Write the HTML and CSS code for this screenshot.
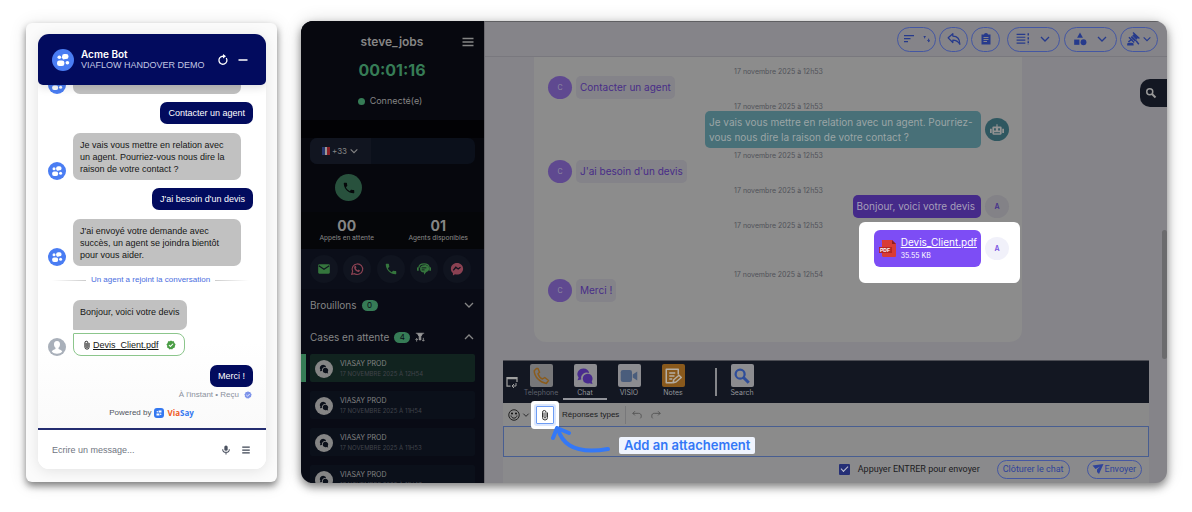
FILE: index.html
```html
<!DOCTYPE html>
<html lang="fr">
<head>
<meta charset="utf-8">
<title>Viaflow handover demo</title>
<link rel="stylesheet" href="styles.css">
</head>
<body>
<svg class="defs" aria-hidden="true">
  <symbol id="people" viewBox="0 0 24 24"><circle cx="12" cy="12" r="12" fill="#4a7df3"/><g fill="#fff"><circle cx="8" cy="9" r="2"/><rect x="11" y="5.500" width="7" height="5.500" rx="2.500"/><rect x="5.500" y="12.500" width="8" height="6" rx="2.500"/><circle cx="16.800" cy="15" r="2"/><path d="M11 9l1-2 3 4-3 .5z"/></g></symbol>
  <symbol id="phone" viewBox="0 0 24 24"><path fill="currentColor" d="M6.600 10.800c1.400 2.800 3.800 5.100 6.600 6.600l2.200-2.200c.3-.3.700-.4 1-.2 1.100.4 2.300.6 3.600.6.600 0 1 .4 1 1V20c0 .6-.4 1-1 1C10.600 21 3 13.400 3 4c0-.6.400-1 1-1h3.500c.6 0 1 .4 1 1 0 1.300.2 2.500.6 3.600.1.300 0 .7-.2 1z"/></symbol>
  <symbol id="down" viewBox="0 0 12 12"><path d="M2 4l4 4 4-4" fill="none" stroke="currentColor" stroke-width="1.300"/></symbol>
  <symbol id="clip" viewBox="0 0 24 24"><path d="M17 7v10a5 5 0 0 1-10 0V6.500a3.500 3.500 0 0 1 7 0V16a2 2 0 0 1-4 0V7" fill="none" stroke="currentColor" stroke-width="2"/></symbol>
  <symbol id="chats" viewBox="0 0 24 24"><path fill="currentColor" d="M10 2a8 7.500 0 0 0-6.500 12L2 17.500l5-1A7.500 7.500 0 0 1 17.500 8 8 7.500 0 0 0 10 2z"/><path fill="currentColor" d="M16 9a6.500 6.500 0 1 0 2 12.500l4 1-1-3.500A6.500 6.500 0 0 0 16 9z"/></symbol>
  <symbol id="seal" viewBox="0 0 24 24"><path fill="currentColor" d="M12 1l3 2 4 0 1 4 3 3-1.500 4L21 18l-4 1.500-2.500 3L12 21.500 8.500 22.500 6 19.500 2.500 18 3 14 1 10.500 4 7l1-4 4 0z"/><path d="M7 12l3.500 3.500L17 9" fill="none" stroke="#fff" stroke-width="2.500"/></symbol>
  <symbol id="search" viewBox="0 0 24 24"><circle cx="9.500" cy="9.500" r="6" fill="none" stroke="currentColor" stroke-width="3"/><path d="M14 14l7 7" stroke="currentColor" stroke-width="4"/></symbol>
</svg>

<section class="frame">
  <div class="widget">
    <header class="w-head">
      <svg class="i22"><use href="#people"/></svg>
      <div class="w-title"><strong>Acme Bot</strong><span>VIAFLOW HANDOVER DEMO</span></div>
      <button class="plain" aria-label="Recharger"><svg class="i12" viewBox="0 0 24 24"><path d="M18.500 8a8 8 0 1 1-6.500-3.500h3" fill="none" stroke="#fff" stroke-width="2.600"/><path d="M12 0l6 4.500-6 4.500z" fill="#fff"/></svg></button>
      <button class="plain" aria-label="Réduire"><svg class="i12" viewBox="0 0 24 24"><path d="M3 12h18" stroke="#fff" stroke-width="3"/></svg></button>
    </header>
    <div class="w-log">
      <div class="w-row"><svg class="i18"><use href="#people"/></svg><div class="bot"><span class="emoji"></span></div></div>
      <div class="me">Contacter un agent</div>
      <div class="w-row"><svg class="i18"><use href="#people"/></svg><div class="bot wide">Je vais vous mettre en relation avec un agent. Pourriez-vous nous dire la raison de votre contact ?</div></div>
      <div class="me">J'ai besoin d'un devis</div>
      <div class="w-row"><svg class="i18"><use href="#people"/></svg><div class="bot wide">J'ai envoyé votre demande avec succès, un agent se joindra bientôt pour vous aider.</div></div>
      <div class="joined">Un agent a rejoint la conversation</div>
      <div class="w-row">
        <svg class="i18" viewBox="0 0 24 24"><circle cx="12" cy="12" r="12" fill="#a9b0ba"/><path d="M12 4c-3 0-4 2-4 4.500 0 2 1 3.500 2 4.500v1.500c-2 1-4.500 1.500-5 3.500 3 4 11 4 14 0-.5-2-3-2.500-5-3.500V13c1-1 2-2.500 2-4.500C16 6 15 4 12 4z" fill="#fff"/></svg>
        <div class="stack">
          <div class="bot last">Bonjour, voici votre devis</div>
          <div class="file"><svg class="i10"><use href="#clip"/></svg><a href="#devis">Devis_Client.pdf</a><svg class="i10 ok"><use href="#seal"/></svg></div>
        </div>
      </div>
      <div class="me merci">Merci !</div>
      <div class="status">À l'instant • Reçu <svg class="i8"><use href="#seal"/></svg></div>
      <div class="powered">Powered by <svg class="i10" viewBox="0 0 24 24"><rect width="24" height="24" rx="7" fill="#3478f0"/><path d="M11 6h7v5h-7zM6 13h7v5H6z" fill="#fff"/><circle cx="8" cy="9" r="1.800" fill="#fff"/><circle cx="16" cy="15" r="1.800" fill="#fff"/></svg><b><i>Via</i>Say</b></div>
    </div>
    <div class="w-input">
      <input type="text" aria-label="Message" placeholder="Ecrire un message...">
      <button class="plain" aria-label="Micro"><svg class="i10" viewBox="0 0 24 24"><rect x="8" y="1" width="8" height="13" rx="4" fill="#4b5260"/><path d="M4 10c0 10 16 10 16 0M12 17v6" fill="none" stroke="#4b5260" stroke-width="2.500"/></svg></button>
      <button class="plain" aria-label="Menu"><svg class="i10" viewBox="0 0 24 24"><path d="M3 5h18M3 12h18M3 19h18" stroke="#3d4453" stroke-width="3"/></svg></button>
    </div>
  </div>
</section>

<section class="app">
  <aside class="side">
    <div class="agent">
      <div class="who"><strong>steve_jobs</strong><button class="plain" aria-label="Menu"><svg class="i12" viewBox="0 0 24 24"><path d="M1 5h22M1 12h22M1 19h22" stroke="#858585" stroke-width="2.600"/></svg></button></div>
      <div class="timer">00:01:16</div>
      <div class="online"><span class="dot"></span>Connecté(e)</div>
    </div>
    <div class="dial">
      <div class="number"><button class="prefix"><span class="flag"></span>+33<svg class="i10"><use href="#down"/></svg></button><input type="tel" aria-label="Numéro"></div>
      <button class="call" aria-label="Appeler"><svg class="i14"><use href="#phone"/></svg></button>
    </div>
    <div class="counts">
      <div><strong>00</strong><span>Appels en attente</span></div>
      <div><strong>01</strong><span>Agents disponibles</span></div>
    </div>
    <div class="channels">
      <button class="green" aria-label="Email"><svg class="i14" viewBox="0 0 24 24"><path d="M4 4h16a2 2 0 0 1 2 2v12a2 2 0 0 1-2 2H4a2 2 0 0 1-2-2V6a2 2 0 0 1 2-2z" fill="currentColor"/><path d="M3 6.500l9 6 9-6" fill="none" stroke="#10141f" stroke-width="2"/></svg></button>
      <button class="red" aria-label="WhatsApp"><svg class="i14" viewBox="0 0 24 24"><path d="M3 21l1.500-5A9 9 0 1 1 8 20z" fill="none" stroke="currentColor" stroke-width="2"/><path d="M8 7l2-.5 1 3-1 1c.5 1.500 2 3 3.500 3.500l1-1 2.500 1c0 2-1.500 3-3 3-4-1-7-4-7-8z" fill="currentColor"/></svg></button>
      <button class="green" aria-label="Téléphone"><svg class="i14"><use href="#phone"/></svg></button>
      <button class="green" aria-label="Chatbot"><svg class="i14" viewBox="0 0 24 24"><path d="M3 10C4 1 20 1 21 10" fill="none" stroke="currentColor" stroke-width="2"/><rect y="9" width="3" height="6" rx="1" fill="currentColor"/><rect x="21" y="9" width="3" height="6" rx="1" fill="currentColor"/><path d="M12 5.500a6.500 6 0 1 0 0 12.500v4l4-5A6.500 6 0 0 0 12 5.500z" fill="currentColor"/><path d="M8 10h8M8 13.500h5" stroke="#10141f" stroke-width="1.500"/></svg></button>
      <button class="red" aria-label="Messenger"><svg class="i14" viewBox="0 0 24 24"><path d="M12 1.500c-6 0-10.500 4.400-10.500 10 0 3 1.300 5.600 3.500 7.400V23l3.500-2c7 2 14-2.500 14-9.500 0-5.600-4.500-10-10.500-10z" fill="currentColor"/><path d="M5.500 14.500L10 9l4 3 4-3" fill="none" stroke="#10141f" stroke-width="2.200"/></svg></button>
    </div>
    <div class="lists">
      <button class="group">Brouillons <span class="badge">0</span><svg class="i12 end"><use href="#down"/></svg></button>
      <button class="group">Cases en attente <span class="badge">4</span><svg class="i10" viewBox="0 0 24 24"><path d="M2 3h20M6 4h12l-4 7v8h-4v-8z" fill="#999" stroke="#999" stroke-width="2"/><path d="M4 15v8M1 19l3-3 3 3M20 14v8M17 19l3 3 3-3" fill="none" stroke="#999" stroke-width="2"/></svg><svg class="i12 end up"><use href="#down"/></svg></button>
      <div class="cases">
        <div class="case active"><span class="round"><svg class="i10"><use href="#chats"/></svg></span><div><b>VIASAY PROD</b><small>17 NOVEMBRE 2025 À 12H54</small></div></div>
        <div class="case"><span class="round"><svg class="i10"><use href="#chats"/></svg></span><div><b>VIASAY PROD</b><small>17 NOVEMBRE 2025 À 11H54</small></div></div>
        <div class="case"><span class="round"><svg class="i10"><use href="#chats"/></svg></span><div><b>VIASAY PROD</b><small>17 NOVEMBRE 2025 À 11H53</small></div></div>
        <div class="case"><span class="round"><svg class="i10"><use href="#chats"/></svg></span><div><b>VIASAY PROD</b><small>17 NOVEMBRE 2025 À 11H47</small></div></div>
      </div>
    </div>
  </aside>

  <main class="main">
    <div class="tools">
      <button class="pill mid" aria-label="Trier"><svg class="i12" viewBox="0 0 24 24"><path d="M2 5h20M2 11h13M2 17h8" stroke="currentColor" stroke-width="2.500"/></svg><svg class="i8" viewBox="0 0 24 24"><path d="M5 3v7M2 6l3-3 3 3M17 11v9M13 16l4 4 4-4" fill="none" stroke="currentColor" stroke-width="3"/></svg></button>
      <button class="pill" aria-label="Répondre"><svg class="i14" viewBox="0 0 24 24"><path d="M2 10l8-7v4c8 0 12 5 12 14-3-5-6-7-12-7v4z" fill="none" stroke="currentColor" stroke-width="2.200" stroke-linejoin="round"/></svg></button>
      <button class="pill" aria-label="Notes"><svg class="i12" viewBox="0 0 24 24"><path d="M3 3h5a4 3 0 0 1 8 0h5v20H3z" fill="currentColor"/><path d="M7 9h10M7 13h10M7 17h7" stroke="#858489" stroke-width="2"/></svg></button>
      <button class="pill big" aria-label="Liste"><svg class="i14" viewBox="0 0 24 24"><path d="M1 4h15M1 9h15M1 14h15M1 19h15" stroke="currentColor" stroke-width="2"/><path d="M21 2v5M21 9v5M21 16v5" stroke="currentColor" stroke-width="2.500" stroke-dasharray="3 1"/></svg><svg class="i12"><use href="#down"/></svg></button>
      <button class="pill big gap" aria-label="Catégories"><svg class="i14" viewBox="0 0 24 24"><path d="M12 1l5 9H7z" fill="currentColor"/><rect x="2" y="13" width="9" height="9" fill="currentColor"/><circle cx="18" cy="17.500" r="5" fill="currentColor"/></svg><svg class="i12"><use href="#down"/></svg></button>
      <button class="pill mid last-pill" aria-label="Modérer"><svg class="i14" viewBox="0 0 24 24"><path d="M8 9l6-6 7 7-6 6zM2 23v-3c0-2 11-2 11 0v3z" fill="currentColor"/><path d="M12 1l11 10M5 9l9 9M15 12l7 9M11 12l-7 5" stroke="currentColor" stroke-width="2.400"/><path d="M9 5l10 10" stroke="#858489"/></svg><svg class="i10"><use href="#down"/></svg></button>
    </div>

    <div class="chat">
      <div class="panel">
        <time>17 novembre 2025 à 12h53</time>
        <div class="line"><span class="ava c">C</span><p class="in">Contacter un agent</p></div>
        <time>17 novembre 2025 à 12h53</time>
        <div class="line out"><p class="auto">Je vais vous mettre en relation avec un agent. Pourriez-vous nous dire la raison de votre contact ?</p><span class="ava robot"><svg class="i14" viewBox="0 0 24 24"><path d="M11 2h2v4h5a2 2 0 0 1 2 2v10a2 2 0 0 1-2 2H6a2 2 0 0 1-2-2V8a2 2 0 0 1 2-2h5zM0 10h3v7H0zM21 10h3v7h-3z" fill="currentColor"/><path d="M7 9h3v4H7zM14 9h3v4h-3zM7 16h10v1.500H7z" fill="#2f5760"/></svg></span></div>
        <time>17 novembre 2025 à 12h53</time>
        <div class="line"><span class="ava c">C</span><p class="in">J'ai besoin d'un devis</p></div>
        <time>17 novembre 2025 à 12h53</time>
        <div class="line out"><p class="agent-msg">Bonjour, voici votre devis</p><span class="ava a">A</span></div>
        <time>17 novembre 2025 à 12h53</time>
        <div class="line out spot">
          <div class="doc"><svg class="i18" viewBox="0 0 18 18"><path d="M5 0h8l4 4v12a1 1 0 0 1-1 1H5a2 2 0 0 1-2-1V1a1 1 0 0 1 2-1z" fill="#d93b35"/><path d="M13 0l4 4h-4z" fill="#8f1f1f"/><rect y="7" width="13" height="6" fill="#b62622"/><text class="pdf" x="1" y="12">PDF</text></svg><div><a href="#devis">Devis_Client.pdf</a><small>35.55 KB</small></div></div>
          <span class="ava a lit">A</span>
        </div>
        <time>17 novembre 2025 à 12h54</time>
        <div class="line"><span class="ava c">C</span><p class="in">Merci !</p></div>
      </div>
    </div>

    <div class="composer">
      <div class="tabs">
        <svg class="i12 frame-ico" viewBox="0 0 24 24"><path d="M22 12V3H2v17h7M2 5h20" fill="none" stroke="#a0a0a0" stroke-width="2.500"/><path d="M13 20h7v-6M12 20l4-4M12 20l4 4" fill="none" stroke="#a0a0a0" stroke-width="2"/></svg>
        <button class="tab dim"><span class="tile grey"><svg class="i18" viewBox="0 0 24 24"><path d="M6 2L3 5c0 8 8 16 16 17l3-4-5-4-3 2c-3-1-5-4-6-7l2-2-2-5z" fill="none" stroke="#8b5c1c" stroke-width="2" stroke-linejoin="round"/></svg></span>Telephone</button>
        <button class="tab on"><span class="tile violet"><svg class="i18"><use href="#chats"/></svg></span>Chat</button>
        <button class="tab"><span class="tile"><svg class="i18" viewBox="0 0 24 24"><rect x="1" y="4" width="15" height="16" rx="3" fill="#4a5d7c"/><path d="M17 10l6-4v12l-6-4z" fill="#4a5d7c"/></svg></span>VISIO</button>
        <button class="tab"><span class="tile orange"><svg class="i18" viewBox="0 0 24 24"><path d="M19 10V3H3v18h8M7 8h8M7 12h7M7 16h4M12 21l1-4 7-6 3 3-7 6z" fill="none" stroke="#b5aea3" stroke-width="2" stroke-linejoin="round"/></svg></span>Notes</button>
        <span class="bar"></span>
        <button class="tab narrow"><span class="tile"><svg class="i18 blue"><use href="#search"/></svg></span>Search</button>
      </div>
      <div class="format">
        <button class="plain emo" aria-label="Emoji"><svg class="i12" viewBox="0 0 24 24"><circle cx="12" cy="12" r="10.500" fill="none" stroke="#222" stroke-width="2"/><path d="M6 13c1 7 11 7 12 0" fill="none" stroke="#222" stroke-width="2"/><circle cx="8" cy="9" r="1.800"/><circle cx="16" cy="9" r="1.800"/></svg><svg class="i8"><use href="#down"/></svg></button>
        <button class="attach" aria-label="Ajouter une pièce jointe"><svg class="i12"><use href="#clip"/></svg></button>
        <button class="plain replies">Réponses types</button>
        <span class="rule"></span>
        <button class="plain undo" aria-label="Annuler"><svg class="i10" viewBox="0 0 24 24"><path d="M7 3L2 8l5 5M2 8h14c8 0 7 10 4 12" fill="none" stroke="#4d4d4d" stroke-width="2"/></svg></button>
        <button class="plain" aria-label="Rétablir"><svg class="i10 flip" viewBox="0 0 24 24"><path d="M7 3L2 8l5 5M2 8h14c8 0 7 10 4 12" fill="none" stroke="#4d4d4d" stroke-width="2"/></svg></button>
      </div>
      <textarea aria-label="Votre message"></textarea>
      <div class="send">
        <label><input type="checkbox" checked>Appuyer ENTRER pour envoyer</label>
        <button>Clôturer le chat</button>
        <button class="go"><svg class="i12" viewBox="0 0 24 24"><path d="M1 5l22-3-9 20-4-4v-5l6-6-9 5z" fill="currentColor"/></svg>Envoyer</button>
      </div>
      <svg class="arrow" viewBox="0 0 60 32"><path d="M57 23C28 28 12 21 7 3M2 12L6 2l12 5" fill="none" stroke="#3478f6" stroke-width="4" stroke-linecap="round" stroke-linejoin="round"/></svg>
      <span class="callout">Add an attachement</span>
    </div>
    <span class="thumb"></span>
    <button class="finder" aria-label="Rechercher"><svg class="i12"><use href="#search"/></svg></button>
  </main>
</section>
</body>
</html>
```

FILE: styles.css
```css
* { box-sizing: border-box; }
body {
  margin: 0;
  height: 100vh;
  padding: 21px 25px 29px 26px;
  display: flex;
  gap: 24px;
  background: #fff;
  font: 9px/12px Inter, "Liberation Sans", sans-serif;
  overflow: hidden;
}
button, input, textarea { font: inherit; color: inherit; margin: 0; }
button { cursor: pointer; padding: 0; border: 0; background: none; }
p { margin: 0; }
svg { flex: none; display: block; }
.defs { position: absolute; width: 0; height: 0; }
.i8 { width: 8px; height: 8px; }
.i10 { width: 10px; height: 10px; }
.i12 { width: 12px; height: 12px; }
.i14 { width: 14px; height: 14px; }
.i18 { width: 18px; height: 18px; }
.i22 { width: 22px; height: 22px; }

/* Visitor widget */
.frame {
  width: 251px;
  margin: 2px 0 1px;
  padding: 11px 11px 13px 12px;
  flex: none;
  border-radius: 6px;
  background: #fbfbfb;
  box-shadow: 0 4px 7px rgba(0,0,0,.45), 0 2px 18px rgba(0,0,0,.12);
  font-family: "Liberation Sans", Arial, sans-serif;
}
.widget {
  height: 100%;
  display: flex;
  flex-direction: column;
  border-radius: 11px;
  overflow: hidden;
  background: #fff;
  box-shadow: 0 2px 14px rgba(0,0,0,.1);
}
.w-head {
  display: flex;
  align-items: center;
  gap: 8px;
  height: 51px;
  flex: none;
  padding: 0 17px 0 14px;
  background: #020b5e;
  color: #fff;
  border-radius: 0 0 5px 5px;
  box-shadow: 0 2px 10px rgba(0,0,0,.15);
  z-index: 1;
}
.w-title { flex: 1; display: grid; line-height: 11px; margin-left: -1px; }
.w-title strong { font-size: 10px; font-weight: 600; font-family: Inter, sans-serif; }
.w-title span { color: #c3c7e3; white-space: nowrap; }
.w-log {
  flex: 1;
  min-height: 0;
  overflow: hidden;
  display: flex;
  flex-direction: column;
  justify-content: flex-end;
  gap: 8px;
  padding: 0 13px 9px 10px;
  background: linear-gradient(#fff 75%, #fafafa);
}
.w-log > * { flex: none; }
.w-row { display: flex; align-items: flex-end; gap: 7px; }
.bot { width: 168px; padding: 6px 7px 5px; background: #c1c1c1; color: #161616; border-radius: 7px; min-height: 24px; }
.emoji { display: block; width: 8px; height: 8px; margin: 1px 0 0 2px; background: #2c6876; border-radius: 2px; }
.me { align-self: flex-end; padding: 5px 8px; background: #020b5e; color: #fff; border-radius: 7px; margin-bottom: 1px; }
.joined { display: flex; align-items: center; gap: 5px; margin: 0 0 6px; font-size: 8px; color: #4a6ee0; white-space: nowrap; justify-content: center; }
.joined::before, .joined::after { content: ""; width: 34px; height: 1px; background: linear-gradient(to right, transparent, #ccc); }
.joined::after { background: linear-gradient(to left, transparent, #ccc); }
.stack { display: grid; gap: 3px; justify-items: start; }
.last { width: auto; min-height: 30px; border-bottom-left-radius: 1px; }
.file { display: flex; align-items: center; gap: 1px; height: 23px; padding: 0 8px; border: 1px solid #8cc68c; border-radius: 1px 8px 8px 8px; background: #fff; }
.file a { color: #161616; }
.ok { color: #4a9d45; margin-left: 6px; }
.merci { margin: 1px 0 0; }
.status { display: flex; gap: 5px; align-items: center; justify-content: flex-end; color: #8b919c; font-size: 8px; margin: -6px 1px -2px; }
.status svg { color: #7d93ea; }
.powered { display: flex; justify-content: center; align-items: center; gap: 3px; color: #50555e; font-size: 8px; padding-left: 2px; }
.powered b { color: #3478f0; font-family: "Open Sans", sans-serif; }
.powered i { font-style: normal; color: #f05a24; }
.w-input { display: flex; align-items: center; gap: 10px; height: 41px; flex: none; padding: 0 15px 0 14px; border-top: 2px solid #242d70; background: #fff; }
.w-input input { flex: 1; min-width: 0; border: 0; outline: 0; padding: 0; background: none; }
.w-input input::placeholder { color: #70757f; }

/* Agent console */
.app {
  flex: 1;
  min-width: 0;
  display: flex;
  border-radius: 12px;
  overflow: hidden;
  background: #858489;
  box-shadow: 0 4px 8px rgba(0,0,0,.45), 0 0 18px rgba(0,0,0,.14);
}
.side { width: 183px; flex: none; background: #090b15; color: #858585; overflow: hidden; display: flex; flex-direction: column; }
.side > * { flex: none; }
.agent { height: 99px; padding: 13px 10px 0 9px; background: #07080f; text-align: center; }
.who { display: grid; grid-template-columns: 12px 1fr 12px; align-items: center; line-height: 16px; }
.who strong { grid-column: 2; font-size: 12px; font-weight: 600; }
.timer { margin-top: 8px; font-size: 16px; line-height: 24px; font-weight: 700; color: #367c56; }
.online { display: flex; align-items: center; justify-content: center; gap: 5px; margin: 13px 4px 0 0; }
.dot { width: 7px; height: 7px; border-radius: 50%; background: #367c56; }
.dial { height: 92px; padding: 18px 9px 0; background: linear-gradient(#020205 18px, #06070d 18px); }
.number { display: flex; height: 26px; border-radius: 7px; overflow: hidden; background: #0b101b; }
.prefix { width: 61px; display: flex; align-items: center; justify-content: center; gap: 2px; background: #111520; font-size: 8px; }
.flag { width: 8px; height: 8px; background: linear-gradient(to right, #26366e 33%, #999 33% 66%, #8b2027 66%); }
.number input { flex: 1; min-width: 0; border: 0; background: none; }
.call { display: grid; place-items: center; width: 27px; height: 27px; margin: 10px 0 0 25px; border-radius: 50%; background: #28513d; color: #05080a; }
.counts { display: grid; grid-template-columns: 1fr 1fr; height: 37px; padding-top: 6px; background: #050609; text-align: center; }
.counts strong { display: block; font-size: 14px; line-height: 16px; }
.counts span { display: block; font-family: Roboto, sans-serif; font-size: 7px; line-height: 8px; }
.channels { display: flex; justify-content: space-between; align-items: center; height: 40px; padding: 0 13px 0 9px; background: #0b0e19; }
.channels button { width: 28px; height: 28px; border-radius: 50%; display: grid; place-items: center; background: #10141f; }
.green { color: #35763d; }
.red { color: #8b4152; }
.lists { padding: 0 9px; }
.group { width: 100%; height: 32px; display: flex; align-items: center; gap: 5px; font-size: 10px; }
.badge { width: 16px; height: 11px; border-radius: 6px; background: #367c56; color: #090b15; font-size: 8px; line-height: 11px; }
.end { margin-left: auto; }
.up { transform: scaleY(-1); }
.flip { transform: scaleX(-1); }
.cases { display: grid; gap: 9px; padding-top: 1px; }
.case { position: relative; height: 28px; display: flex; align-items: center; gap: 7px; padding: 1px 0 0 5px; border-radius: 2px; background: #0b101a; }
.active { background: #11231f; }
.active::before { content: ""; position: absolute; left: -9px; top: 0; width: 5px; height: 28px; background: #367c56; }
.round { width: 18px; height: 18px; border-radius: 50%; background: #858585; color: #0b101a; display: grid; place-items: center; }
.case b, .case small { display: block; font-weight: 400; font-size: 7px; line-height: 10px; }
.case small { font-size: 6px; color: #41444b; }

.main { position: relative; flex: 1; min-width: 0; display: flex; flex-direction: column; border-left: 1px solid #6c6b70; border-top: 1px solid #5f5f62; }
.tools { height: 35px; flex: none; display: flex; justify-content: flex-end; align-items: center; gap: 3px; padding: 0 9px 0 0; border-bottom: 1px solid #79787e; color: #263a8c; }
.pill { width: 29px; height: 25px; border: 1px solid #4457a3; border-radius: 13px; display: flex; align-items: center; justify-content: center; gap: 8px; }
.pill.mid { width: 39px; }
.pill.last-pill { width: 38px; gap: 2px; }
.pill.big { width: 53px; margin-left: 4px; gap: 9px; }
.pill.gap { margin: 0 0 0 1px; }
.chat { flex: 1; min-height: 0; overflow: hidden; padding: 0 145px 18px 49px; }
.panel { height: 100%; padding: 7px 13px 7px 14px; background: #8c8c8c; border-radius: 0 0 12px 12px; }
time { display: block; height: 12px; line-height: 15px; text-align: center; font-size: 7px; color: #505259; }
.line { position: relative; display: flex; align-items: center; gap: 4px; font-size: 10px; line-height: 14px; }
.line p { padding: 4px; border-radius: 5px; min-height: 23px; line-height: 15px; }
.out { justify-content: flex-end; }
.ava { position: relative; width: 24px; height: 23px; flex: none; border-radius: 50%; display: grid; place-items: center; font-size: 7px; }
.c { background: #5f4990; color: #918da0; }
.in { background: #848389; color: #482d88; }
.line .auto { width: 276px; padding: 4px 4px 3px; background: #487078; color: #9ba5a6; }
.robot { background: #2f5760; color: #929292; }
.line .agent-msg { padding: 4px 6px 4px 4px; background: #452a89; color: #a69fb9; }
.a { background: #838287; color: #44308b; font-weight: 600; }
.spot::before { content: ""; position: absolute; top: -8px; bottom: -16px; right: -11px; width: 161px; border-radius: 6px; background: #fff; }
.lit { background: #f1f1fa; color: #7650e0; }
.doc { position: relative; display: flex; align-items: center; gap: 4px; height: 37px; padding: 0 4px 0 5px; background: #7d4df5; border-radius: 6px; color: #fff; line-height: 13px; }
.doc a, .doc small { display: block; color: #fff; }
.doc small { font-size: 7px; }
.pdf { font: 700 5px/5px "Liberation Sans", sans-serif; fill: #fff; }

.composer { position: relative; flex: none; margin: 0 18px 0 18px; background: #8a8a8c; color: #1c1c1e; }
.tabs { display: flex; align-items: center; height: 43px; background: #131722; color: #92949a; border-top: 1px solid #4c4d54; }
.frame-ico { margin: 0 1px 0 3px; }
.tab { align-self: stretch; width: 44px; padding-top: 3px; font-size: 7px; line-height: 11px; display: flex; flex-direction: column; align-items: center; border-bottom: 2px solid transparent; height: 39px; }
.on { border-color: #92949a; }
.dim { color: #5c606b; }
.tile { width: 23px; height: 23px; flex: none; display: grid; place-items: center; border-radius: 2px; background: #8c8c90; }
.grey { background: #777779; }
.violet { color: #492b8e; }
.orange { background: #89591c; }
.blue { color: #2e4d9a; }
.bar { width: 2px; height: 28px; margin: 0 3px 0 20px; background: #85868a; }
.format { display: flex; align-items: center; height: 23px; padding-left: 5px; font-size: 8px; background: #8a8a8a; }
.emo { display: flex; align-items: center; gap: 2px; }
.attach { position: relative; z-index: 2; width: 18px; height: 18px; margin: 0 8px 0 6px; display: grid; place-items: center; border: 1px solid #6d9cf4; background: #fff; box-shadow: 0 0 0 2px #dce7fd, 0 0 0 5px #fff; border-radius: 1px; color: #333; }
.replies { font-family: "Liberation Sans", Arial, sans-serif; }
.rule { width: 1px; height: 18px; margin: 0 6px; background: #78787a; }
.undo { margin-right: 9px; }
textarea { display: block; width: 100%; height: 31px; resize: none; border: 1px solid #485e91; background: #8b8b8b; outline: 0; padding: 4px; }
.send { display: flex; align-items: center; justify-content: flex-end; height: 26px; padding: 0 7px 2px 0; font-family: Roboto, sans-serif; }
.send label { display: flex; align-items: center; gap: 8px; margin-right: 17px; }
.send input { appearance: none; width: 11px; height: 11px; border-radius: 1px; background: #252f76; display: grid; place-items: center; }
.send input:checked::before { content: ""; width: 6px; height: 3px; margin-bottom: 2px; border: solid #c3c5d2; border-width: 0 0 1px 1px; transform: rotate(-45deg); }
.send button { height: 19px; padding: 0 5px; border: 1px solid #4457a3; border-radius: 10px; color: #2e439b; }
.send .go { display: flex; align-items: center; gap: 1px; margin-left: 17px; padding: 0 5px 0 4px; }
.arrow { position: absolute; left: 48px; top: 66px; width: 60px; height: 32px; z-index: 3; }
.callout { position: absolute; left: 116px; top: 77px; padding: 0 5px; border-radius: 2px; background: #eff4fe; color: #3478f6; font-size: 13px; line-height: 17px; font-weight: 600; white-space: nowrap; }
.thumb { position: absolute; right: 0; top: 208px; width: 5px; height: 129px; border-radius: 3px; background: #6b6b6d; }
.finder { position: absolute; right: 0; top: 57px; width: 27px; height: 28px; padding-left: 5px; border-radius: 10px 0 0 10px; background: #131722; color: #999; }
```
